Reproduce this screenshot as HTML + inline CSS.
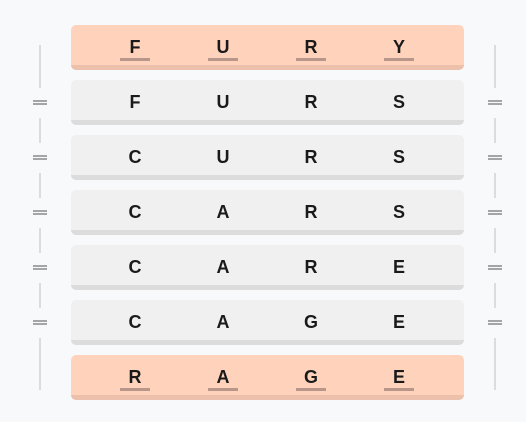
<!DOCTYPE html>
<html><head><style>
body{margin:0;width:526px;height:422px;background:#f8f9fb;position:relative;font-family:"Liberation Sans","DejaVu Sans",sans-serif;overflow:hidden}
.row{position:absolute;left:71px;width:393px;height:40px;border-radius:5px;box-sizing:content-box}
.g{background:#f0f0f0;border-bottom:5px solid #dcdcdc}
.o{background:#ffd3bb;border-bottom:5px solid #ecc0aa}
.l{position:absolute;width:30px;text-align:center;font-weight:bold;font-size:18px;color:#1a1a1a;top:12px}
.u{position:absolute;top:33px;width:30px;height:3px;background:#b9968a}
.v{position:absolute;width:2px;background:#dcdcdc}
.eq{position:absolute;width:14px;border-top:2px solid #a5a5a5;border-bottom:2px solid #a5a5a5;height:1px}
</style></head><body>
<div class="row o" style="top:25px">
<div class="l" style="left:49px">F</div><div class="u" style="left:49px"></div>
<div class="l" style="left:137px">U</div><div class="u" style="left:137px"></div>
<div class="l" style="left:225px">R</div><div class="u" style="left:225px"></div>
<div class="l" style="left:313px">Y</div><div class="u" style="left:313px"></div>
</div>
<div class="row g" style="top:80px"><div class="l" style="left:49px">F</div><div class="l" style="left:137px">U</div><div class="l" style="left:225px">R</div><div class="l" style="left:313px">S</div></div>
<div class="row g" style="top:135px"><div class="l" style="left:49px">C</div><div class="l" style="left:137px">U</div><div class="l" style="left:225px">R</div><div class="l" style="left:313px">S</div></div>
<div class="row g" style="top:190px"><div class="l" style="left:49px">C</div><div class="l" style="left:137px">A</div><div class="l" style="left:225px">R</div><div class="l" style="left:313px">S</div></div>
<div class="row g" style="top:245px"><div class="l" style="left:49px">C</div><div class="l" style="left:137px">A</div><div class="l" style="left:225px">R</div><div class="l" style="left:313px">E</div></div>
<div class="row g" style="top:300px"><div class="l" style="left:49px">C</div><div class="l" style="left:137px">A</div><div class="l" style="left:225px">G</div><div class="l" style="left:313px">E</div></div>
<div class="row o" style="top:355px">
<div class="l" style="left:49px">R</div><div class="u" style="left:49px"></div>
<div class="l" style="left:137px">A</div><div class="u" style="left:137px"></div>
<div class="l" style="left:225px">G</div><div class="u" style="left:225px"></div>
<div class="l" style="left:313px">E</div><div class="u" style="left:313px"></div>
</div>
<div class="v" style="left:39px;top:45px;height:43px"></div>
<div class="v" style="left:39px;top:118px;height:25px"></div>
<div class="v" style="left:39px;top:173px;height:25px"></div>
<div class="v" style="left:39px;top:228px;height:25px"></div>
<div class="v" style="left:39px;top:283px;height:25px"></div>
<div class="v" style="left:39px;top:338px;height:52px"></div>
<div class="eq" style="left:33px;top:100px"></div>
<div class="eq" style="left:33px;top:155px"></div>
<div class="eq" style="left:33px;top:210px"></div>
<div class="eq" style="left:33px;top:265px"></div>
<div class="eq" style="left:33px;top:320px"></div>
<div class="v" style="left:494px;top:45px;height:43px"></div>
<div class="v" style="left:494px;top:118px;height:25px"></div>
<div class="v" style="left:494px;top:173px;height:25px"></div>
<div class="v" style="left:494px;top:228px;height:25px"></div>
<div class="v" style="left:494px;top:283px;height:25px"></div>
<div class="v" style="left:494px;top:338px;height:52px"></div>
<div class="eq" style="left:488px;top:100px"></div>
<div class="eq" style="left:488px;top:155px"></div>
<div class="eq" style="left:488px;top:210px"></div>
<div class="eq" style="left:488px;top:265px"></div>
<div class="eq" style="left:488px;top:320px"></div>
</body></html>
